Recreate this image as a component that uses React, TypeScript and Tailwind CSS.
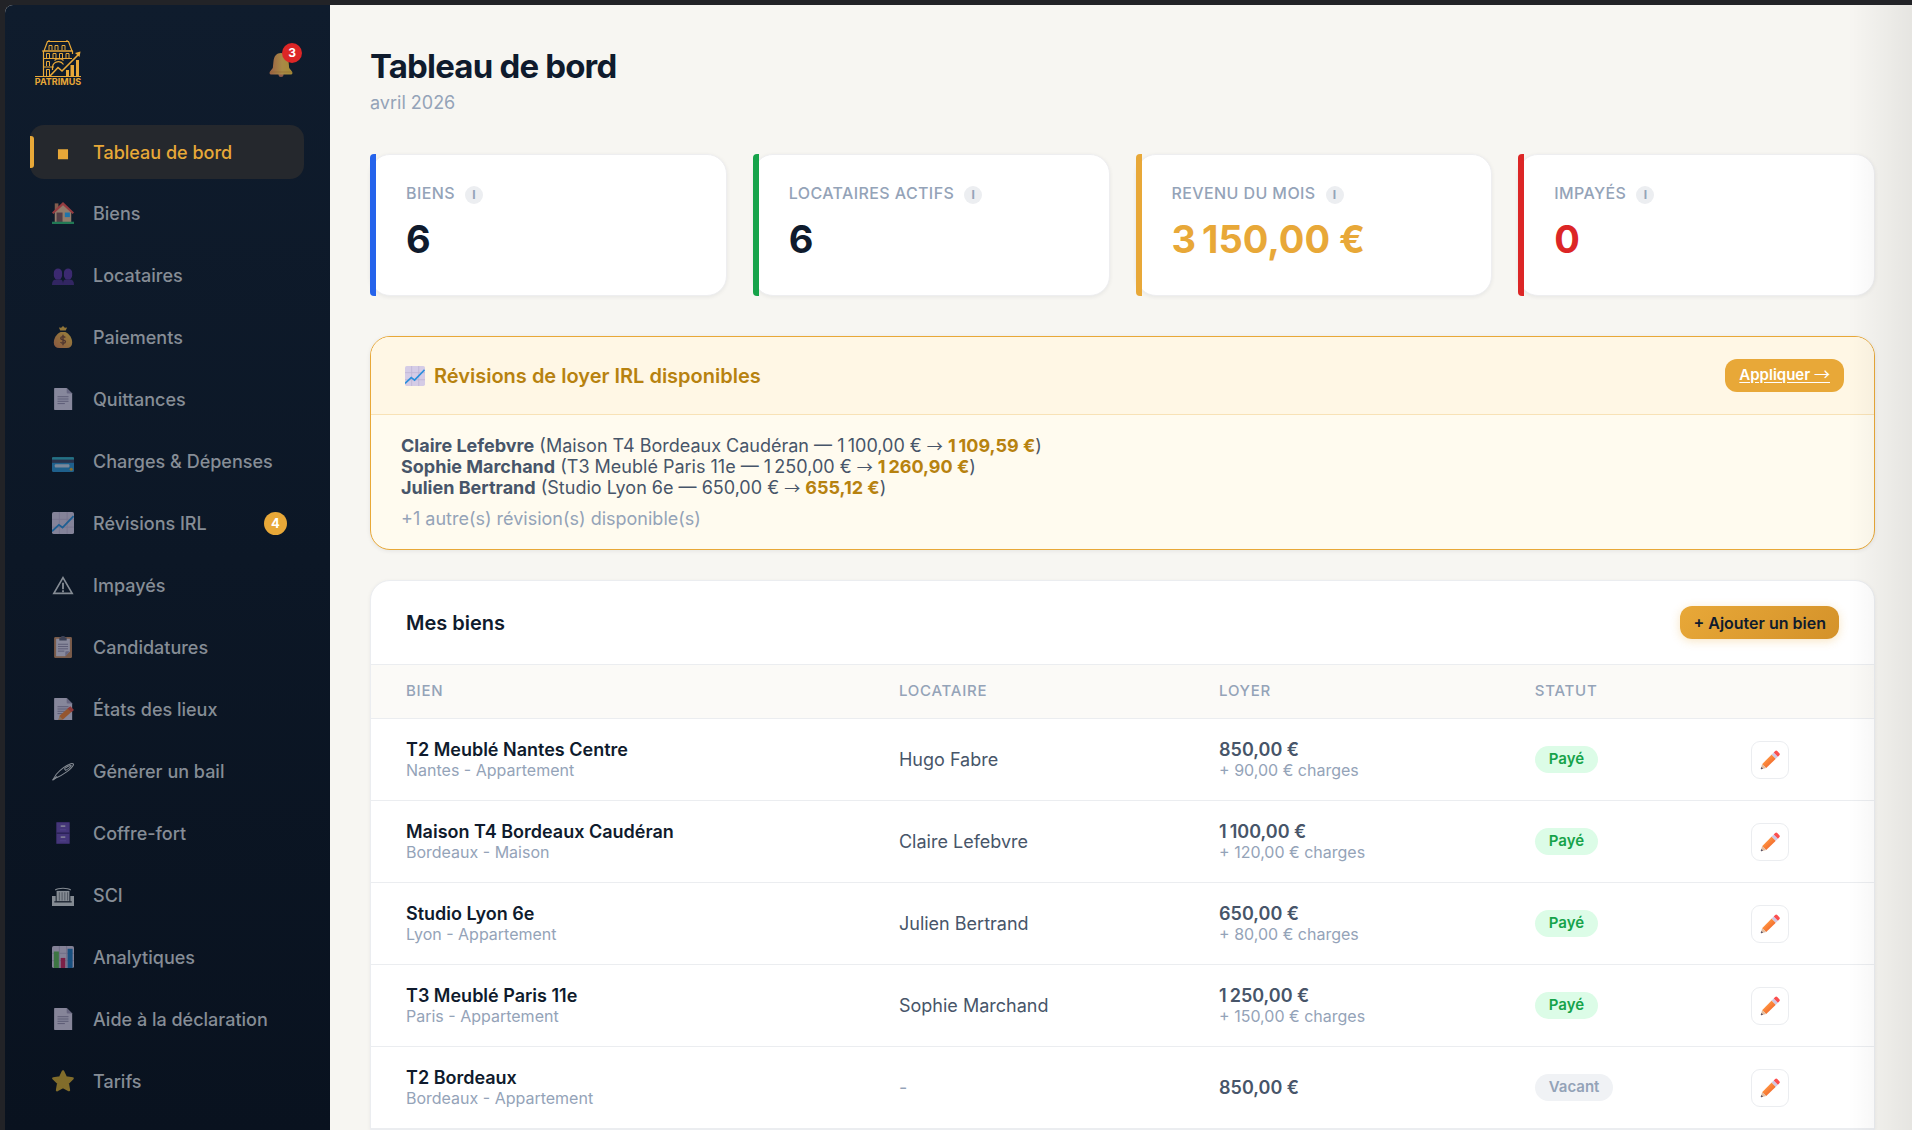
import type { ReactNode } from "react";

type IconProps = { className?: string };

function Logo() {
  return (
    <div className="flex w-[46px] flex-col items-center">
      <svg viewBox="0 0 46 37" className="h-[37px] w-[46px]" fill="none" stroke="#e8a838">
        <path d="M12.5 1.5h21l3.5 9.5H9zM14 0v2M32 0v2" strokeWidth="1.2" />
        <path d="M8.500 11v25M7 11h31M8 18.500h29M8 27h11M37.500 11v3M0 36.500h46" strokeWidth="1.2" />
        <path d="M14 10V5.500h3V10M20 10V5.500h3V10M27 10V5.500h3V10" strokeWidth="1" />
        <path d="M11.500 18v-4.500h3V18M18 18v-4.500h3V18M24.500 18v-4.500h3V18M31 18v-4.500h3V18" strokeWidth="1" />
        <path d="M11.500 26v-4.500h3V26M11.500 36v-6.500h3V36" strokeWidth="1" />
        <path d="M17.500 30v-3a6 6 0 0 1 11 -2.500M19.500 20.500l2 -1.500h5l2 1.500" strokeWidth="1.200" />
        <path d="M15 36l8-8.500 4 3.500 17-17" strokeWidth="1.600" />
        <path d="M40 13l5.500-1.500L44.500 17z" fill="#e8a838" stroke="none" />
        <path d="M31 30h3v6h-3zM35.500 25h3.500v11h-3.500zM41 20h3v16h-3z" fill="#e8a838" stroke="none" />
      </svg>
      <span className="text-[9px] leading-[9px] font-bold text-[#e8a838]">PATRIMUS</span>
    </div>
  );
}

function BellIcon({ className }: IconProps) {
  return (
    <svg viewBox="0 0 24 24" className={className}>
      <defs>
        <linearGradient id="bell" x1="0" x2="1">
          <stop offset="0" stopColor="#9a6044" />
          <stop offset=".55" stopColor="#a98a46" />
          <stop offset="1" stopColor="#a58a35" />
        </linearGradient>
      </defs>
      <circle cx="12" cy="21.500" r="2.500" fill="#8f5c4c" />
      <path d="M12 0c4.500 0 7 3 7.500 8l.7 7L23 18.500c.8 1 .5 3-1 3H2c-1.500 0-1.800-2-1-3L3.800 15l.7-7C5 3 7.500 0 12 0z" fill="url(#bell)" />
      <path d="M1 18.500h22v1H1z" fill="#8d6332" opacity=".5" />
    </svg>
  );
}

function HouseIcon({ className }: IconProps) {
  return (
    <svg viewBox="0 0 24 24" className={className}>
      <path d="M3 1.500h4v8H3z" fill="#d08a66" />
      <path d="M3 11l9-9 9 9v11H3z" fill="#e8bd98" />
      <path d="M12 0L0 11.500l1.500 1.500L12 3.500 22.500 13l1.500-1.500z" fill="#ef5350" />
      <path d="M5 11.500h6.500V22H5z" fill="#84565a" />
      <path d="M14 11.500h5.500v5H14z" fill="#29b0ff" />
      <path d="M0 21.500h24V24H0z" fill="#2eb872" />
    </svg>
  );
}

function PeopleIcon({ className }: IconProps) {
  return (
    <svg viewBox="0 0 24 24" className={className} fill="#5b35a0">
      <rect x="2" y="5" width="9" height="12" rx="4.500" />
      <rect x="13" y="5" width="9" height="12" rx="4.500" />
      <path d="M0 23c0-4 1.500-6 5-6h3.500c3 0 3.500 2 3.500 6z" opacity=".8" />
      <path d="M12 23c0-4 .5-6 3.500-6H19c3.500 0 5 2 5 6z" opacity=".8" />
    </svg>
  );
}

function MoneyIcon({ className }: IconProps) {
  return (
    <svg viewBox="0 0 24 24" className={className}>
      <defs>
        <linearGradient id="money" x1="1" x2="0" y2="1">
          <stop offset="0" stopColor="#f5c646" />
          <stop offset="1" stopColor="#dc8352" />
        </linearGradient>
      </defs>
      <path d="M9 5L7.500 1.500 10 2l2-2 2 2 2.500-.5L15 5z" fill="#e9b243" />
      <path d="M9.500 6.500h5C19 8.500 22 13 22 18c0 4-2 6-6 6H8c-4 0-6-2-6-6 0-5 3-9.500 7.500-11.500z" fill="url(#money)" />
      <path d="M14.500 12.500c-1-1.300-5-1.500-5 .8 0 2.500 5.200 1.200 5.200 3.700 0 2.300-4 2.200-5.400.6M12 9.500v11.500" fill="none" stroke="#7a4a35" strokeWidth="1.500" />
    </svg>
  );
}

function PageIcon({ className, children }: IconProps & { children?: ReactNode }) {
  return (
    <svg viewBox="0 0 24 24" className={className}>
      <path d="M3 0h13l6 6v18H3a.7.7 0 0 1-.7-.7V.7C2.300.300 2.600 0 3 0z" fill="#d9d2ea" />
      <path d="M16 0l6 6h-5c-.6 0-1-.4-1-1z" fill="#a49bbd" />
      <path d="M6 9.500h12M6 12h12M6 14.500h12M6 17h8" stroke="#8b83a5" strokeWidth="1" />
      {children}
    </svg>
  );
}

function MemoIcon({ className }: IconProps) {
  return (
    <PageIcon className={className}>
      <path d="M7 24l1.500-5L18 10.500l4 4L12 23.500z" fill="#f08239" />
      <path d="M17 11.500l3-2.500 4 4-3 2.500z" fill="#e8524a" />
      <path d="M7 24l1.200-4 3 3z" fill="#d8b48e" />
    </PageIcon>
  );
}

function CardIcon({ className }: IconProps) {
  return (
    <svg viewBox="0 0 24 24" className={className}>
      <rect y="8" width="24" height="16" rx="1.500" fill="#2b91cf" />
      <path d="M0 10.500V9.500C0 8.500.500 8 1.500 8h21c1 0 1.500.500 1.500 1.500v1z" fill="#35afc0" />
      <path d="M0 10.500h24V14H0z" fill="#3d4565" />
      <rect x="3" y="15.500" width="16" height="3.500" rx="1" fill="#c3d3e8" />
      <circle cx="21" cy="21" r="1.700" fill="#e0ab32" />
    </svg>
  );
}

function TrendIcon({ className }: IconProps) {
  return (
    <svg viewBox="0 0 24 24" className={className}>
      <rect width="24" height="24" rx="2" fill="#d5cce6" />
      <path d="M8 0v24M16.500 0v24M0 8h24M0 16.500h24" stroke="#bfb4d4" strokeWidth="1" />
      <path d="M0 21l7.500-7 4 3L23.500 4.500" fill="none" stroke="#2b8fdb" strokeWidth="2" />
    </svg>
  );
}

function WarningIcon({ className }: IconProps) {
  return (
    <svg viewBox="0 0 24 24" className={className} fill="none" stroke="#d6dade">
      <path d="M12 4L22 21.200H2z" strokeWidth="1.800" />
      <path d="M12 9.500V16.500" strokeWidth="2" />
      <path d="M12 17.800v2" strokeWidth="2" />
    </svg>
  );
}

function ClipboardIcon({ className }: IconProps) {
  return (
    <svg viewBox="0 0 24 24" className={className}>
      <rect x="2.300" y="1" width="19.500" height="23" rx="1.500" fill="#c48a63" />
      <path d="M4.500 3h15v13.500l-5 5.500h-10z" fill="#dcd6ec" />
      <path d="M19.500 16.500l-5 5.500v-4.500c0-.6.400-1 1-1z" fill="#a49bbd" />
      <path d="M8 1.500h2A2 2 0 0 1 14 1.500h2v3.500H8z" fill="#5b5d75" />
      <path d="M6.500 9h11M6.500 11.500h11M6.500 14h11M6.500 16.500h7" stroke="#8b83a5" strokeWidth="1" />
    </svg>
  );
}

function PenIcon({ className }: IconProps) {
  return (
    <svg viewBox="0 0 24 24" className={className} fill="none" stroke="#d6dade" strokeWidth="1.100">
      <path d="M.700 22l4-6.500C9 10.500 15 6 20.500 4c2-.7 3.500.3 2.700 1.800C21 10 12 16.500 5.500 19z" />
      <path d="M.700 22L5.500 18M13.500 9.500c2.500-2 4.500-3.200 7-3.800M13.500 9.500l1.500 1.800c3-1.700 5-3.300 6.500-5.300" />
    </svg>
  );
}

function CabinetIcon({ className }: IconProps) {
  return (
    <svg viewBox="0 0 24 24" className={className}>
      <rect x="4.500" width="15" height="24" rx="1" fill="#553b96" />
      <path d="M5.500 1h13v10.500h-13zM5.500 13h13v10h-13z" fill="#6b4db3" />
      <path d="M9.500 3.500h5V5.500h-5zM9.500 15.500h5v2h-5z" fill="#c6bce0" />
      <path d="M8.500 8.500h7M8.500 20.500h7" stroke="#8161d1" />
      <path d="M4.500 12.200h15" stroke="#3c2973" strokeWidth="1.200" />
    </svg>
  );
}

function InstitutionIcon({ className }: IconProps) {
  return (
    <svg viewBox="0 0 24 24" className={className} fill="#d6dade">
      <path d="M0 13h4v6h16v-6h4v11H0z" />
      <path d="M5 7.500h14V19H5z" />
      <path d="M8 9v9M11 9v9M14 9v9M17 9v9" stroke="#4c535e" strokeWidth=".7" />
      <path d="M3.500 6.500C7 4 17 4 20.500 6.500" fill="none" stroke="#d6dade" strokeWidth="1.200" />
      <path d="M2.500 19.500h19" stroke="#0b1322" strokeWidth="1.200" />
    </svg>
  );
}

function BarsIcon({ className }: IconProps) {
  return (
    <svg viewBox="0 0 24 24" className={className}>
      <rect width="24" height="24" rx="2" fill="#d5cce6" />
      <path d="M8 0v24M16 0v24M0 8h24M0 16h24" stroke="#b5a9cc" />
      <path d="M2 6h5.500v18H2z" fill="#5fb65a" />
      <path d="M9.500 13h5v11h-5z" fill="#c92a5f" />
      <path d="M17 3h5.500v21H17z" fill="#2379bf" />
    </svg>
  );
}

function StarIcon({ className }: IconProps) {
  return (
    <svg viewBox="0 0 24 24" className={className}>
      <path
        d="M12 1.500l3.200 6.600 7.300 1.100-5.300 5.100 1.300 7.700L12 18.600 5.500 22l1.300-7.700L1.500 9.200l7.300-1.100z"
        fill="#d1a933"
        stroke="#d1a933"
        strokeWidth="2.600"
        strokeLinejoin="round"
      />
    </svg>
  );
}

function SquareIcon({ className }: IconProps) {
  return (
    <svg viewBox="0 0 24 24" className={className}>
      <path d="M6.500 9h11v11h-11z" fill="#e8a838" />
    </svg>
  );
}

function PencilIcon({ className }: IconProps) {
  return (
    <svg viewBox="0 0 24 24" className={className}>
      <defs>
        <linearGradient id="pencil" x1="0" x2="1" y1="0" y2="1">
          <stop offset=".3" stopColor="#ff9440" />
          <stop offset=".8" stopColor="#f0652c" />
        </linearGradient>
      </defs>
      <path d="M2.500 17L14 5.500l5 5L7.500 21.500z" fill="url(#pencil)" />
      <path d="M14 5.500L16.500 3l5 5-2.500 2.500z" fill="#cfc7e3" />
      <path d="M16.500 3l1.700-1.700c.8-.8 1.700-.8 2.500 0l2.500 2.500c.8.8.8 1.700 0 2.500L21.500 8z" fill="#fb4f4f" />
      <path d="M2.500 17l5 4.500L1.500 23c-.4 0-.7-.3-.5-.8z" fill="#e0bda2" />
      <path d="M1.700 20.500l2 2L1.500 23c-.4 0-.7-.3-.5-.8z" fill="#5b5468" />
    </svg>
  );
}

const navItems = [
  { label: "Tableau de bord", Icon: SquareIcon, active: true },
  { label: "Biens", Icon: HouseIcon },
  { label: "Locataires", Icon: PeopleIcon },
  { label: "Paiements", Icon: MoneyIcon },
  { label: "Quittances", Icon: PageIcon },
  { label: "Charges & Dépenses", Icon: CardIcon },
  { label: "Révisions IRL", Icon: TrendIcon, badge: 4 },
  { label: "Impayés", Icon: WarningIcon },
  { label: "Candidatures", Icon: ClipboardIcon },
  { label: "États des lieux", Icon: MemoIcon },
  { label: "Générer un bail", Icon: PenIcon },
  { label: "Coffre-fort", Icon: CabinetIcon },
  { label: "SCI", Icon: InstitutionIcon },
  { label: "Analytiques", Icon: BarsIcon },
  { label: "Aide à la déclaration", Icon: PageIcon },
  { label: "Tarifs", Icon: StarIcon },
];

const stats = [
  { label: "Biens", value: "6", bar: "bg-[#2563eb]", color: "text-[#0f1b2d]" },
  { label: "Locataires actifs", value: "6", bar: "bg-[#16a34a]", color: "text-[#0f1b2d]" },
  { label: "Revenu du mois", value: "3\u202f150,00 €", bar: "bg-[#e8a838]", color: "text-[#e8a838]" },
  { label: "Impayés", value: "0", bar: "bg-[#dc2626]", color: "text-[#dc2626]" },
];

const revisions = [
  { name: "Claire Lefebvre", place: "Maison T4 Bordeaux Caudéran", from: "1\u202f100,00 €", to: "1\u202f109,59 €" },
  { name: "Sophie Marchand", place: "T3 Meublé Paris 11e", from: "1\u202f250,00 €", to: "1\u202f260,90 €" },
  { name: "Julien Bertrand", place: "Studio Lyon 6e", from: "650,00 €", to: "655,12 €" },
];

const properties = [
  { name: "T2 Meublé Nantes Centre", info: "Nantes - Appartement", tenant: "Hugo Fabre", rent: "850,00 €", charges: "+ 90,00 € charges", paid: true },
  { name: "Maison T4 Bordeaux Caudéran", info: "Bordeaux - Maison", tenant: "Claire Lefebvre", rent: "1\u202f100,00 €", charges: "+ 120,00 € charges", paid: true },
  { name: "Studio Lyon 6e", info: "Lyon - Appartement", tenant: "Julien Bertrand", rent: "650,00 €", charges: "+ 80,00 € charges", paid: true },
  { name: "T3 Meublé Paris 11e", info: "Paris - Appartement", tenant: "Sophie Marchand", rent: "1\u202f250,00 €", charges: "+ 150,00 € charges", paid: true },
  { name: "T2 Bordeaux", info: "Bordeaux - Appartement", tenant: "", rent: "850,00 €", charges: "", paid: false },
];

function Arrow() {
  return <span className="font-['Noto_Sans_CJK_SC',sans-serif] text-[16px] leading-none font-normal">→</span>;
}

function Sidebar() {
  return (
    <aside className="w-[325px] shrink-0 bg-linear-to-b from-[#0f1c2d] to-[#09121f] pr-[26px] pl-[25px]">
      <div className="flex h-[120px] items-start justify-between pt-[35px] pr-[11px] pl-[5px]">
        <Logo />
        <button className="relative mt-[13px]" aria-label="Notifications">
          <BellIcon className="h-6 w-6" />
          <span className="absolute -top-[10px] -right-[9px] grid h-5 w-5 place-items-center rounded-full bg-[#dc2626] text-[12px] leading-none font-bold text-white">
            3
          </span>
        </button>
      </div>
      <nav className="flex flex-col gap-[6px]">
        {navItems.map(({ label, Icon, active, badge }) => (
          <a
            key={label}
            href="#"
            className={`relative flex items-center gap-[17px] rounded-[14px] pr-[17px] pl-5 text-[18px] font-medium ${
              active ? "h-[54px] bg-[#25282d] text-[#e8a838]" : "h-14 text-[#868d96]"
            }`}
          >
            {active && <span className="absolute top-[11px] left-0 h-8 w-1 rounded-r-[3px] bg-[#e8a838]" />}
            <span className="grid w-[26px] place-items-center">
              <Icon className={active ? "h-[22px] w-[22px]" : "h-[22px] w-[22px] opacity-60"} />
            </span>
            {label}
            {badge && (
              <span className="ml-auto grid h-[23px] w-[23px] place-items-center rounded-full bg-[#e8a838] text-[13px] leading-none font-bold text-white">
                {badge}
              </span>
            )}
          </a>
        ))}
      </nav>
    </aside>
  );
}

function StatCard({ stat }: { stat: (typeof stats)[number] }) {
  return (
    <div className="relative h-[142px] rounded-[20px] border border-[#eeeef0] bg-white px-[35px] pt-[26px] shadow-[0_1px_4px_rgba(15,27,45,.07)]">
      <span className={`absolute -top-px -bottom-px -left-px w-[6px] rounded-l-[4px] ${stat.bar}`} />
      <div className="flex items-center gap-[10px]">
        <span className="text-[16px] leading-6 font-medium tracking-wide text-[#94a3b8] uppercase">{stat.label}</span>
        <span className="mt-[3px] grid h-[18px] w-[18px] place-items-center rounded-full bg-[#eceef1] text-[12px] leading-none font-bold text-[#94a3b8]">
          I
        </span>
      </div>
      <p className={`mt-[10px] text-[38px] leading-[48px] font-bold tracking-tight ${stat.color}`}>{stat.value}</p>
    </div>
  );
}

function RevisionsAlert() {
  return (
    <section className="mt-10 overflow-hidden rounded-[20px] border border-[#e8a838] bg-[#fffbef] shadow-[0_1px_4px_rgba(15,27,45,.08)]">
      <div className="flex h-[78px] items-center justify-between border-b border-[#f8e2b6] bg-[#fff7e5] pr-[30px] pl-[34px]">
        <h2 className="flex items-center gap-[9px] text-[20px] leading-6 font-semibold text-[#b7820f]">
          <TrendIcon className="h-5 w-5" />
          Révisions de loyer IRL disponibles
        </h2>
        <a href="#" className="flex h-[33px] items-center rounded-[12px] bg-[#e8a838] px-[14px] text-[15px] font-semibold text-white">
          <span className="underline underline-offset-2">
            Appliquer <Arrow />
          </span>
        </a>
      </div>
      <div className="px-[30px] pt-5 pb-5 text-[18px] leading-[21px] text-[#475569]">
        {revisions.map((r) => (
          <p key={r.name}>
            <strong className="font-bold">{r.name}</strong> ({r.place} — {r.from} <Arrow />{" "}
            <strong className="font-bold text-[#b7820f]">{r.to}</strong>)
          </p>
        ))}
        <p className="mt-[10px] text-[#94a3b8]">+1 autre(s) révision(s) disponible(s)</p>
      </div>
    </section>
  );
}

function PropertiesTable() {
  return (
    <section className="mt-[30px] overflow-hidden rounded-t-[20px] border border-[#ebedf0] bg-white shadow-[0_1px_4px_rgba(15,27,45,.06)]">
      <div className="flex h-[83px] items-center justify-between px-[35px]">
        <h2 className="text-[20px] font-semibold text-[#0f1b2d]">Mes biens</h2>
        <button className="h-[33px] rounded-[12px] bg-linear-135 from-[#e8a838] to-[#d4922a] px-[13px] text-[16px] font-semibold text-[#0f1b2d] shadow-[0_2px_10px_rgba(232,168,56,.3)]">
          + Ajouter un bien
        </button>
      </div>
      <table className="w-full table-fixed text-left">
        <thead className="border-y border-[#ebedf0] bg-[#fbfaf7]">
          <tr className="h-[54px] text-[15px] tracking-wider text-[#94a3b8] uppercase">
            <th className="w-[32.8%] pl-[35px] font-medium">Bien</th>
            <th className="w-[21.3%] pl-[35px] font-medium">Locataire</th>
            <th className="w-[21%] pl-[35px] font-medium">Loyer</th>
            <th className="w-[14.4%] pl-[35px] font-medium">Statut</th>
            <th aria-label="Actions" />
          </tr>
        </thead>
        <tbody>
          {properties.map((p) => (
            <tr key={p.name} className="h-[82px] border-b border-[#ebedf0]">
              <td className="pl-[35px]">
                <p className="text-[18px] leading-[21px] font-semibold text-[#0f1b2d]">{p.name}</p>
                <p className="text-[16px] leading-[21px] text-[#94a3b8]">{p.info}</p>
              </td>
              <td className={`pl-[35px] text-[18px] ${p.tenant ? "text-[#475569]" : "text-[#94a3b8]"}`}>{p.tenant || "-"}</td>
              <td className="pl-[35px]">
                <p className="text-[18px] leading-[21px] font-semibold text-[#475569]">{p.rent}</p>
                {p.charges && <p className="text-[16px] leading-[21px] text-[#94a3b8]">{p.charges}</p>}
              </td>
              <td className="pl-[35px]">
                <span
                  className={`inline-flex h-[27px] items-center rounded-full px-[14px] align-middle text-[15px] font-semibold ${
                    p.paid ? "bg-[#dcfce7] text-[#16a34a]" : "bg-[#f0f2f5] text-[#94a3b8]"
                  }`}
                >
                  {p.paid ? "Payé" : "Vacant"}
                </span>
              </td>
              <td className="pl-[35px]">
                <button
                  className="grid h-[38px] w-[38px] place-items-center rounded-[9px] border border-[#ebedf0] bg-white"
                  aria-label={`Modifier ${p.name}`}
                >
                  <PencilIcon className="h-5 w-5" />
                </button>
              </td>
            </tr>
          ))}
        </tbody>
      </table>
    </section>
  );
}

export default function App() {
  return (
    <div className="h-screen overflow-hidden bg-[#222327] pt-[5px] pl-[5px] font-['Inter',sans-serif]">
      <div className="relative flex h-full overflow-hidden rounded-tl-[8px] bg-[#f7f6f2]">
        <Sidebar />
        <main className="min-w-0 flex-1 pt-[41px] pr-[37px] pl-10">
          <h1 className="text-[33px] leading-10 font-bold tracking-tight text-[#0f1b2d]">Tableau de bord</h1>
          <p className="mt-[5px] text-[18px] leading-6 text-[#94a3b8]">avril 2026</p>
          <div className="mt-[39px] grid grid-cols-4 gap-[26px]">
            {stats.map((stat) => (
              <StatCard key={stat.label} stat={stat} />
            ))}
          </div>
          <RevisionsAlert />
          <PropertiesTable />
        </main>
        <div className="pointer-events-none absolute inset-y-0 right-0 w-16 bg-linear-to-r from-transparent to-black/7" />
      </div>
    </div>
  );
}
